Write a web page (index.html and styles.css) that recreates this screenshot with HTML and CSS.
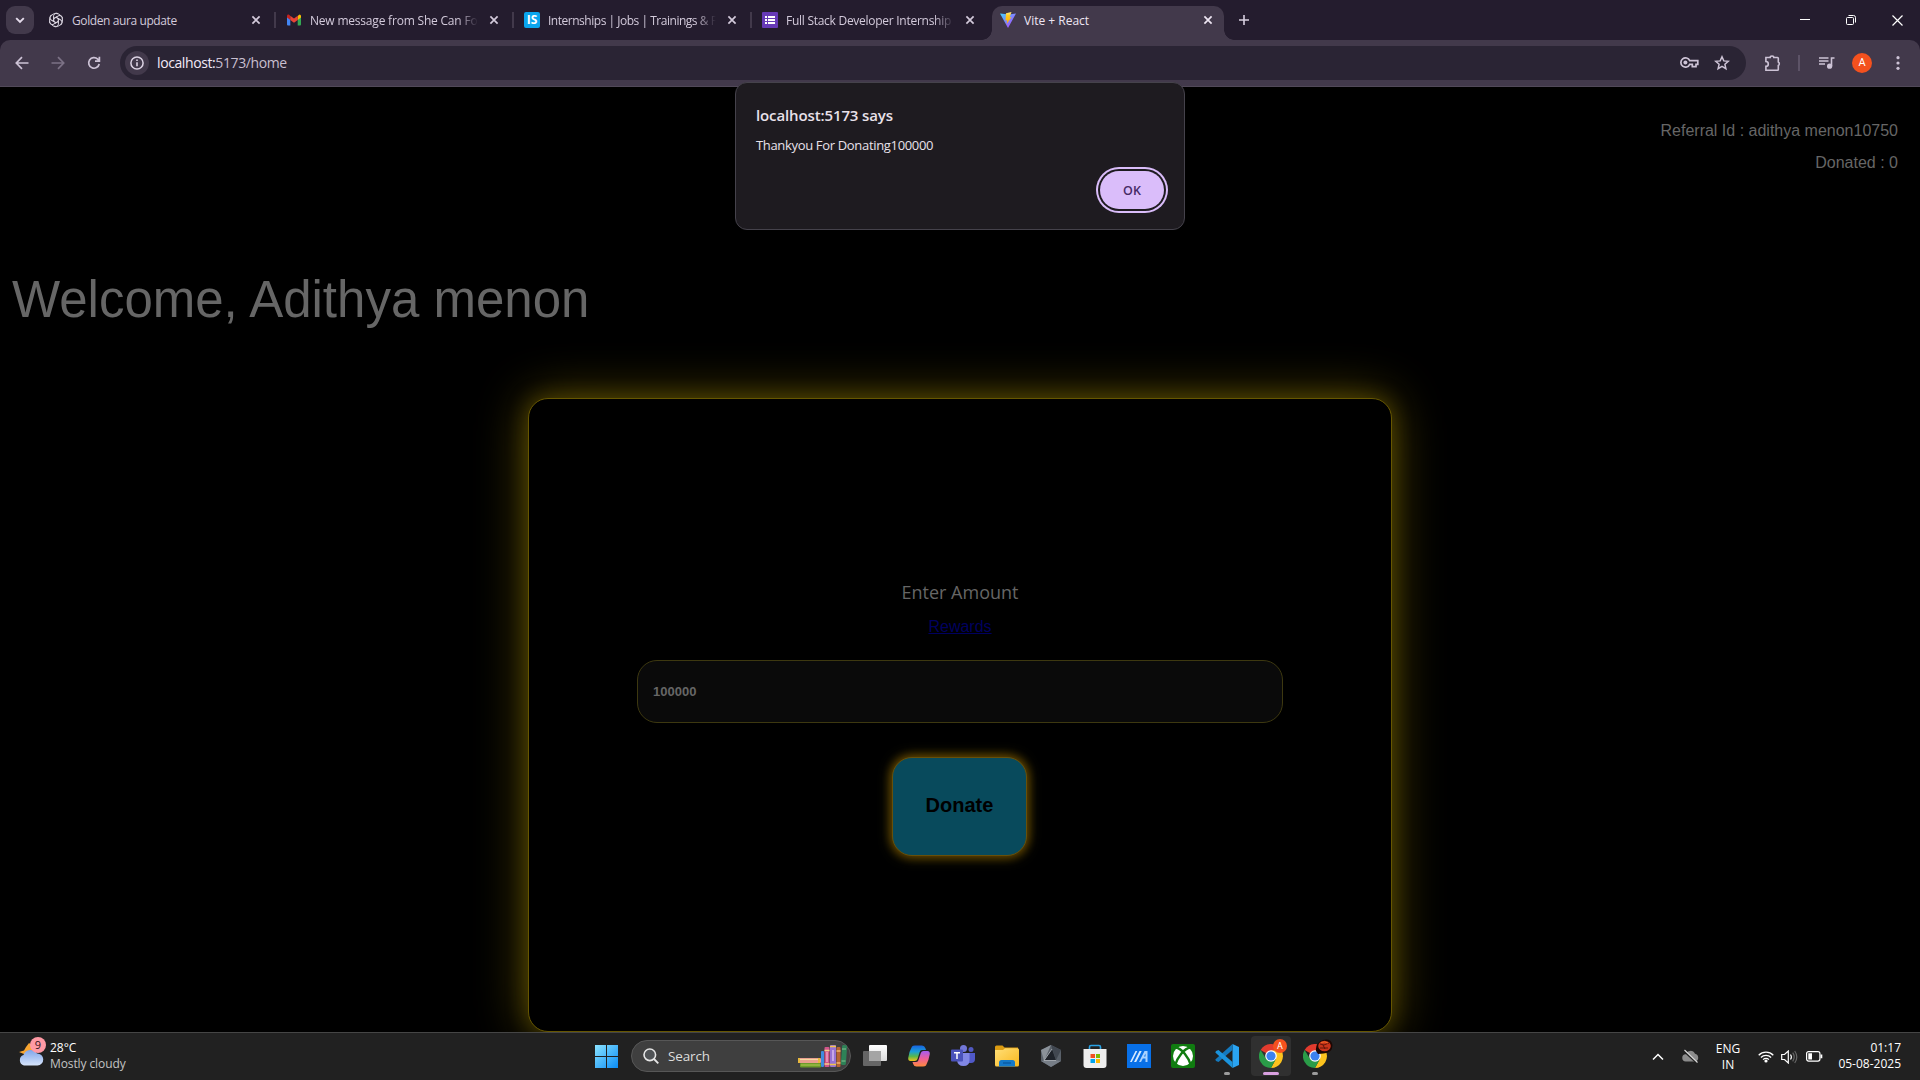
FILE: index.html
```html
<!DOCTYPE html>
<html lang="en">
<head>
<meta charset="utf-8">
<title>Vite + React</title>
<link rel="stylesheet" href="styles.css">
</head>
<body>
<svg width="0" height="0" class="defs">
  <defs>
    <symbol id="x" viewBox="0 0 10 10"><path d="M1.4 1.4l7.2 7.2M8.6 1.4L1.4 8.6" fill="none" stroke="currentColor" stroke-width="1.7"/></symbol>
    <symbol id="chrome" viewBox="0 0 24 24">
      <path d="M12 12L1.6 6A12 12 0 0 1 22.4 6Z" fill="#e33b2e"/>
      <path d="M12 6.4H22.6A12 12 0 0 1 12 24L17 14.8Z" fill="#fcc31e"/>
      <path d="M1.6 6L7 14.8L12 17.6L17 14.8L12 24A12 12 0 0 1 1.6 6Z" fill="#2a9c48"/>
      <circle cx="12" cy="12" r="5.8" fill="#fff"/><circle cx="12" cy="12" r="4.6" fill="#3b82f0"/>
    </symbol>
    <linearGradient id="gWin" x1="0" y1="0" x2="1" y2="1"><stop offset="0" stop-color="#8be3ff"/><stop offset="1" stop-color="#0a8cf5"/></linearGradient>
    <linearGradient id="gVite" x1="0" y1="0" x2="1" y2="1"><stop offset="0" stop-color="#41d1ff"/><stop offset="1" stop-color="#bd34fe"/></linearGradient>
    <linearGradient id="gBolt" x1="0" y1="0" x2="0" y2="1"><stop offset="0" stop-color="#ffea83"/><stop offset=".3" stop-color="#ffcb1f"/><stop offset="1" stop-color="#ffa800"/></linearGradient>
    <linearGradient id="gCloud" x1="0" y1="0" x2="0" y2="1"><stop offset="0" stop-color="#7fa5ea"/><stop offset="1" stop-color="#d6e4fb"/></linearGradient>
    <linearGradient id="gCopA" x1="0" y1="0" x2="0" y2="1"><stop offset="0" stop-color="#1763e0"/><stop offset=".4" stop-color="#1a9fd8"/><stop offset=".7" stop-color="#58b84b"/><stop offset="1" stop-color="#f1c21b"/></linearGradient>
    <linearGradient id="gCopB" x1="0" y1="0" x2="0" y2="1"><stop offset="0" stop-color="#a45cf0"/><stop offset=".5" stop-color="#ee5f98"/><stop offset="1" stop-color="#ff8a3c"/></linearGradient>
    <linearGradient id="gFold" x1="0" y1="0" x2="1" y2="1"><stop offset="0" stop-color="#ffdf78"/><stop offset="1" stop-color="#f9b71c"/></linearGradient>
    <linearGradient id="gTask" x1="0" y1="0" x2="0" y2="1"><stop offset="0" stop-color="#fff"/><stop offset="1" stop-color="#dcdcdc"/></linearGradient>
  </defs>
</svg>

<header class="tabstrip">
  <div class="tab-search"><svg width="10" height="7" viewBox="0 0 10 7"><path d="M1.2 1.2L5 5l3.800-3.800" fill="none" stroke="#e5dcec" stroke-width="1.900"/></svg></div>
  <div class="tab">
    <svg class="fav" viewBox="0 0 16 16"><g fill="none" stroke="#d9d4df" stroke-width="1">
      <path id="petal" d="M8 5.300L5.600 6.700V3.800A2.900 2.900 0 0 1 10.300 1.800M8 5.300L11.500 7.300"/><use href="#petal" transform="rotate(60 8 8)"/><use href="#petal" transform="rotate(120 8 8)"/><use href="#petal" transform="rotate(180 8 8)"/><use href="#petal" transform="rotate(240 8 8)"/><use href="#petal" transform="rotate(300 8 8)"/><circle cx="8" cy="8" r="6.500"/></g></svg>
    <span class="tab-title t1">Golden aura update</span><svg class="close"><use href="#x"/></svg>
  </div>
  <div class="tab">
    <svg class="fav" viewBox="0 0 16 16"><path d="M1 4v8.500q0 1 1 1h2.300V6z" fill="#4285f4"/><path d="M15 4v8.500q0 1-1 1h-2.300V6z" fill="#34a853"/><path d="M11.700 4v4L15 5.500V4q0-1.600-1.500-1.600z" fill="#fbbc04"/><path d="M1 4v1.500L4.300 8V4L2.800 2.600Q1 2.400 1 4z" fill="#c5221f"/><path d="M2.500 2.400L8 6.600l3.700-2.800V8L8 10.800 4.300 8V3.800z" fill="#ea4335"/></svg>
    <span class="tab-title fade t2">New message from She Can Fou</span><svg class="close"><use href="#x"/></svg>
  </div>
  <div class="tab">
    <div class="fav fav-is">IS</div>
    <span class="tab-title fade t3">Internships | Jobs | Trainings &amp; P</span><svg class="close"><use href="#x"/></svg>
  </div>
  <div class="tab last">
    <svg class="fav" viewBox="0 0 16 16"><rect width="16" height="16" rx="1" fill="#673ab7"/><path d="M3 4h2v2H3zM3 7h2v2H3zM3 10h2v2H3zM6 4h7v2H6zM6 7h7v2H6zM6 10h7v2H6z" fill="#fff"/></svg>
    <span class="tab-title fade t4">Full Stack Developer Internship -</span><svg class="close"><use href="#x"/></svg>
  </div>
  <div class="tab active">
    <svg class="fav" viewBox="0 0 16 16"><path d="M0 1.500L8 16 16 1.500 9 2.600z" fill="url(#gVite)"/><path d="M11.500 0L6 1.200 5.500 8.600l1.700-.3-.5 3.600L11.600 5l-2 .4L11.500 0z" fill="url(#gBolt)"/></svg>
    <span class="tab-title t5">Vite + React</span><svg class="close"><use href="#x"/></svg>
  </div>
  <svg class="newtab" width="10" height="10"><path d="M5 0v10M0 5h10" stroke="#d8cfe0" stroke-width="1.600"/></svg>
  <div class="winctl">
    <svg width="10" height="12"><path d="M0 5.500h10" stroke="#fff"/></svg>
    <svg width="10" height="10" viewBox="0 0 10 10"><rect x=".5" y="2.500" width="7" height="7" rx="1" fill="none" stroke="#fff"/><path d="M2.500 .5h5q2 0 2 2v5" fill="none" stroke="#fff"/></svg>
    <svg width="11" height="11"><path d="M.5 .5l10 10M10.500 .5l-10 10" stroke="#fff" stroke-width="1.200"/></svg>
  </div>
</header>

<nav class="toolbar">
  <svg class="nav" viewBox="0 0 16 16"><path d="M14.500 8H2.500M8 2.200L2.300 8 8 13.800" fill="none" stroke="#cdc3d6" stroke-width="1.700"/></svg>
  <svg class="nav" viewBox="0 0 16 16"><path d="M1.500 8h12M8 2.200L13.700 8 8 13.800" fill="none" stroke="#7c7286" stroke-width="1.700"/></svg>
  <svg class="nav" viewBox="0 0 16 16"><path d="M13.200 9A5.300 5.300 0 1 1 11.700 4.100L13.300 5.700M13.400 1.800V6.100H9" fill="none" stroke="#cdc3d6" stroke-width="1.700"/></svg>
  <div class="omnibox">
    <div class="info"><svg width="14" height="14"><circle cx="7" cy="7" r="6.100" fill="none" stroke="#dcd3e4" stroke-width="1.500"/><path d="M7 6.300v4M7 3.400v1.700" stroke="#dcd3e4" stroke-width="1.600"/></svg></div>
    <span class="url"><b>localhost:</b>5173/home</span>
    <svg class="key" width="19" height="11" viewBox="0 0 19 11"><path d="M9.700 3.700A4.600 4.600 0 1 0 9.700 7.300H12.300V9.700H16V7.300H17.800V3.700Z" fill="none" stroke="#cdc3d6" stroke-width="1.700"/><circle cx="5.400" cy="5.500" r="2" fill="#cdc3d6"/></svg>
    <svg width="16" height="16" viewBox="0 0 16 16"><path d="M8 1.800l1.800 4.100 4.500.4-3.400 3 1 4.400L8 11.400l-3.900 2.300 1-4.400-3.400-3 4.500-.4z" fill="none" stroke="#cdc3d6" stroke-width="1.500"/></svg>
  </div>
  <svg class="puzzle" width="18" height="18" viewBox="0 0 18 18"><path d="M2 3.500H6.200A1.800 1.500 0 0 1 9.800 3.500H13.500Q14.300 3.500 14.300 4.300V8A1.500 1.900 0 0 1 14.300 11.600V15.500Q14.300 16.300 13.500 16.300H1.900V12.300A2.300 2.300 0 0 0 1.900 7.500V3.500Z" fill="none" stroke="#cdc3d6" stroke-width="1.600"/></svg>
  <i class="bar"></i>
  <svg class="music" width="16" height="14" viewBox="0 0 16 14"><path d="M0 2h9.500M0 5h9.500M0 8h6M12.500 10V2H15.500" fill="none" stroke="#cdc3d6" stroke-width="1.600"/><circle cx="10.600" cy="10.200" r="2.600" fill="#cdc3d6"/></svg>
  <div class="avatar">A</div>
  <svg class="dots" width="4" height="14"><circle cx="2" cy="1.700" r="1.600" fill="#cdc3d6"/><circle cx="2" cy="7" r="1.600" fill="#cdc3d6"/><circle cx="2" cy="12.300" r="1.600" fill="#cdc3d6"/></svg>
</nav>

<main class="page">
  <div class="stats"><p>Referral Id : adithya menon10750</p><p>Donated : 0</p></div>
  <h1>Welcome, Adithya menon</h1>
  <section class="card">
    <label>Enter Amount</label>
    <a href="#">Rewards</a>
    <input type="text" value="100000">
    <button class="donate">Donate</button>
  </section>
</main>

<div class="dialog">
  <h2>localhost:5173 says</h2>
  <p>Thankyou For Donating100000</p>
  <button>OK</button>
</div>

<footer class="taskbar">
  <div class="weather">
    <div class="wicon">
      <svg width="26" height="28" viewBox="0 0 26 28"><path d="M1 14l5-1.500L8 9l3-4 3 2v9H6z" fill="#f7a531"/><path d="M6 27.500a5.500 5.500 0 0 1-.5-10.500 7.500 7.500 0 0 1 13.500-1.500 6 6 0 0 1 .5 12z" fill="url(#gCloud)"/></svg>
      <span class="badge">9</span>
    </div>
    <div class="wtext"><span>28°C</span><span class="cond">Mostly cloudy</span></div>
  </div>
  <div class="apps">
    <svg class="start" width="23" height="23" viewBox="0 0 23 23"><path d="M0 0h11v11H0zM12 0h11v11H12zM0 12h11v11H0zM12 12h11v11H12z" fill="url(#gWin)"/></svg>
    <div class="search">
      <svg width="16" height="16" viewBox="0 0 16 16"><circle cx="6.800" cy="6.800" r="5.800" fill="#505356" stroke="#e6e6e6" stroke-width="1.600"/><path d="M11 11l4.300 4.300" stroke="#e6e6e6" stroke-width="1.800"/></svg>
      <span>Search</span>
      <svg class="books" width="49" height="23" viewBox="0 0 49 23">
        <rect x="0" y="13" width="23" height="5" rx="1" fill="#e9a08f"/><path d="M2 14.500h20" stroke="#f8d9a0"/><path d="M1 13v5M21 13v5" stroke="#e8b83e" stroke-width="2"/><rect x="2" y="18" width="21" height="4.500" rx="1" fill="#6d9b2c"/><path d="M3 20h19" stroke="#b3c950"/>
        <rect x="23" y="6" width="3" height="16" rx="1" fill="#3d8de0"/><rect x="26.500" y="2" width="5" height="20" rx="1" fill="#d0558b"/><path d="M29 7v10" stroke="#eda3bf" stroke-width="1.500"/><path d="M26.500 5.500h5M26.500 19h5" stroke="#f6cf87" stroke-width="1.500"/><rect x="32" y="0" width="6" height="22" rx="1" fill="#9773d4"/><path d="M32 1.500h6M32 19.500h6" stroke="#f3c34b" stroke-width="1.500"/><path d="M35 5v11" stroke="#d7b8ef" stroke-width="1.500"/><rect x="38.500" y="2" width="4" height="20" rx="1" fill="#b96434"/><path d="M38.500 6h4M38.500 18h4" stroke="#f0b56c" stroke-width="1.500"/><rect x="43.500" y="0" width="5" height="20" rx="1.500" fill="#2e8257" transform="rotate(4 45 10)"/><path d="M44 4h4M43.500 16h4" stroke="#84c193"/>
      </svg>
    </div>
    <div class="app"><svg viewBox="0 0 24 24"><rect x="6" y="1" width="18" height="16" rx="1" fill="url(#gTask)"/><rect x="0" y="7" width="18" height="15" rx="1" fill="#666"/><path d="M6 7h12v10H6z" fill="#a5a5a5"/></svg></div>
    <div class="app"><svg viewBox="0 0 24 24"><path d="M5 2.500Q6 1.500 8 1.500h7q2.500 0 3.300 2.500l.7 2h-4q-1.800 0-2.300 2l-2.200 7q-.7 2-2.700 2H3.500q-2.500 0-2.300-3Q2.300 7 5 2.500z" fill="url(#gCopA)"/><path d="M19 21.500q-1 1-3 1H9.500q-2.500 0-3.300-2.500L5.500 18h3.700q1.800 0 2.300-2l2.300-7q.7-2 2.700-2h4q2.500 0 2.300 3Q21.700 17 19 21.500z" fill="url(#gCopB)"/></svg></div>
    <div class="app"><svg viewBox="0 0 24 24"><circle cx="12.500" cy="4.500" r="3.500" fill="#7277d8"/><circle cx="20" cy="5.500" r="2.500" fill="#5159c2"/><path d="M17 9h7v6q0 4-4 4h-3z" fill="#5059c9"/><path d="M6 9h12.500v7q0 6-6 6t-6.500-6z" fill="#8187e5"/><rect x="0" y="5.500" width="12" height="12" rx="1" fill="#4a52ba"/><path d="M3 8.700h6M6 8.500v6.500" stroke="#fff" stroke-width="1.500"/></svg></div>
    <div class="app"><svg viewBox="0 0 24 24"><path d="M0 3q0-1.500 1.500-1.500h6l2 2H23v6H0z" fill="#dc9c12"/><path d="M0 6h8l2-1.700H22.500q1.500 0 1.500 1.500V21q0 1.500-1.500 1.500h-21Q0 22.500 0 21z" fill="url(#gFold)"/><path d="M4 22.500v-4q0-2.500 2.500-2.500h11q2.500 0 2.500 2.500v4z" fill="#1479c9"/><path d="M8 19h8" stroke="#0a5ca5" stroke-width="1.500"/></svg></div>
    <div class="app"><svg viewBox="0 0 24 24"><path d="M12 1l10 5v11l-10 6-10-6V6z" fill="#596069"/><path d="M12 1L2 6l3 11z" fill="#8b929a"/><path d="M12 1l10 5-5 10z" fill="#414750"/><path d="M2 17l10 6 10-6-6-1z" fill="#777e87"/><path d="M13 5L5 16.500h12z" fill="#1f232a"/><path d="M13 5L5 16.500l12 0" fill="none" stroke="#b8bdc3" stroke-width=".8"/></svg></div>
    <div class="app"><svg viewBox="0 0 24 24"><path d="M6.500 6V3q0-1.500 1.500-1.500h8q1.500 0 1.500 1.500v3" fill="none" stroke="#29a2e5" stroke-width="1.600"/><path d="M.5 5h23v16q0 3-3 3h-17q-3 0-3-3z" fill="#efefef"/><path d="M7.500 10H12v4H7.500z" fill="#f25022"/><path d="M13 10h4v4h-4z" fill="#7fba00"/><path d="M7.500 15H12v4H7.500z" fill="#00a4ef"/><path d="M13 15h4v4h-4z" fill="#ffb900"/></svg></div>
    <div class="app"><svg viewBox="0 0 24 24"><path d="M0 0h24v24H0z" fill="#0870e8"/><path d="M3 18L8.500 7h1.800L4.800 18zM7 18L12.500 7h2.200L9.200 18z" fill="#d5eaff"/><path d="M12 18l5.500-11H20.500V18h-2v-3.500h-2.700L14 18zM17 12.500h1.500V9.500z" fill="#a9d2ff"/></svg></div>
    <div class="app"><svg viewBox="0 0 24 24"><rect width="24" height="24" rx="2" fill="#107c10"/><circle cx="12" cy="12" r="10" fill="#fff"/><path d="M4.500 3.500C11 4.500 17.500 13 20 21.500M19.500 3.500C13 4.500 6.500 13 4 21.500" fill="none" stroke="#107c10" stroke-width="2.400"/></svg></div>
    <div class="app run"><svg viewBox="0 0 24 24"><path d="M17.500 0L24 3v18l-6.500 3z" fill="#2aa4f2"/><path d="M17.500 0v6L3.500 18 1 17 .3 15.500z" fill="#1479bd"/><path d="M17.500 24v-6L3.500 6 1 7 .3 8.500z" fill="#1b93dc"/></svg></div>
    <div class="app run on"><svg><use href="#chrome"/></svg><span class="pf">A</span></div>
    <div class="app run"><svg><use href="#chrome"/></svg><svg class="pf2" viewBox="0 0 18 16"><path d="M3 15L1 12Q0 4 8 1q8-2 9.500 5 0 8-9 8.500z" fill="#1b0704"/><ellipse cx="9.500" cy="7" rx="6.300" ry="5.300" fill="#c9341a"/><path d="M5 5l4 1 5-2M5 9h8M8 6l2 4" stroke="#4b0e06" stroke-width=".8" fill="none"/><path d="M6 3.500q4-1.500 7 .500" stroke="#f06a27" fill="none"/></svg></div>
  </div>
  <div class="tray">
    <svg class="up" width="12" height="8"><path d="M1 6.500l5-5 5 5" fill="none" stroke="#fff" stroke-width="1.500"/></svg>
    <svg class="cloud" width="17" height="15" viewBox="0 0 17 15"><path d="M4 12.500a3.600 3.600 0 0 1-.3-7.200 5 5 0 0 1 9.300-.5 4 4 0 0 1 .5 7.700z" fill="#8c8c8c"/><path d="M1.500 1.500l13.500 12.500" stroke="#202020" stroke-width="2"/><path d="M2.500 1l13 12.500" stroke="#ddd" stroke-width="1.100"/></svg>
    <div class="lang"><span>ENG</span><span>IN</span></div>
    <svg class="wifi" width="16" height="13" viewBox="0 0 16 13"><g fill="none" stroke="#fff" stroke-width="1.300"><path d="M.7 5.200a10.300 10.300 0 0 1 14.600 0M2.900 7.500a7.200 7.200 0 0 1 10.200 0M5.100 9.600a4.100 4.100 0 0 1 5.800 0"/></g><circle cx="8" cy="11" r="1.600" fill="#fff"/></svg>
    <svg class="vol" width="17" height="14" viewBox="0 0 17 14"><path d="M.7 4.500H3.500L7.300 1v12L3.500 9.500H.7z" fill="none" stroke="#fff" stroke-width="1.200"/><path d="M9.500 4.500q1.800 2.500 0 5" fill="none" stroke="#fff" stroke-width="1.200"/><path d="M11.700 2.700q3 4.300 0 8.600M13.700 1q4.200 6 0 12" fill="none" stroke="#666" stroke-width="1.200"/></svg>
    <svg class="bat" width="17" height="11" viewBox="0 0 17 11"><rect x=".6" y=".6" width="13.300" height="9.500" rx="2" fill="none" stroke="#fff" stroke-width="1.200"/><path d="M2.300 2.300H6v6.200H2.300zM14.500 3.500h1.800v3.700h-1.800z" fill="#fff"/></svg>
    <div class="clock"><span class="time">01:17</span><span class="date">05-08-2025</span></div>
  </div>
</footer>
</body>
</html>
```
FILE: styles.css
```css
* { box-sizing: border-box; }
html { height: 100%; background: #000; }
body { margin: 0; width: 1920px; height: 1080px; overflow: hidden; display: flex; flex-direction: column; background: linear-gradient(#241c2e 60px, #000 60px); font-family: "Open Sans", "Noto Sans", sans-serif; }
svg { display: block; flex: none; }
.defs { position: absolute; }
h1, h2, p { margin: 0; font-weight: 400; }

.tabstrip { height: 40px; flex: none; display: flex; background: #241c2e; padding-left: 6px; }
.tab-search { width: 28px; height: 28px; margin: 6px 6px 0 0; border-radius: 9px; background: #42394b; display: flex; align-items: center; justify-content: center; }
.tab { width: 238px; height: 40px; padding: 0 17px 0 8px; display: flex; align-items: center; position: relative; color: #d3cadb; font-size: 12px; }
.tab:not(.last):not(.active)::after { content: ""; position: absolute; left: 234px; top: 12px; width: 2px; height: 16px; background: #42394b; }
.fav { width: 16px; height: 16px; margin-right: 8px; flex: none; }
.fav-is { background: #0aa5ee; border-radius: 2px; color: #fff; font: 700 12px/16px "Open Sans", sans-serif; text-align: center; }
.tab-title { flex: none; width: 168px; margin-right: 11px; padding-top: 2px; white-space: nowrap; line-height: 20px; }
.t1 { letter-spacing: -.4px; }
.t2 { letter-spacing: -.2px; }
.t3 { letter-spacing: -.48px; }
.t4 { letter-spacing: -.27px; }
.fade { -webkit-mask-image: linear-gradient(90deg, #000 148px, transparent 168px); mask-image: linear-gradient(90deg, #000 148px, transparent 168px); }
.close { width: 10px; height: 10px; }
.active { width: 232px; height: 34px; margin-top: 6px; padding-bottom: 6px; border-radius: 10px 10px 0 0; background: #42394b; color: #eee6f3; }
.active::before, .active::after { content: ""; position: absolute; bottom: 0; width: 10px; height: 10px; }
.active::before { left: -10px; background: radial-gradient(circle at 0 0, transparent 9.5px, #42394b 10px); }
.active::after { right: -10px; background: radial-gradient(circle at 100% 0, transparent 9.5px, #42394b 10px); }
.newtab { margin: 15px 0 0 15px; }
.winctl { margin-left: auto; padding-right: 17px; display: flex; align-items: center; gap: 36px; }

.toolbar { height: 47px; flex: none; display: flex; align-items: center; padding: 0 20px 1px 14px; background: #42394b; border-bottom: 1px solid #514959; border-radius: 10px 10px 0 0; }
.nav { width: 16px; height: 16px; margin-right: 20px; }
.omnibox { width: 1626px; height: 34px; margin-left: -2px; border-radius: 17px; background: #2a2434; display: flex; align-items: center; padding: 0 16px 0 5px; }
.info { width: 24px; height: 24px; border-radius: 50%; background: #42394b; display: flex; align-items: center; justify-content: center; margin-right: 8px; }
.url { flex: 1; padding-top: 1px; font-size: 14px; line-height: 20px; letter-spacing: -.4px; color: #c8bfd0; }
.url b { font-weight: 400; color: #f2eaf7; }
.key { margin-right: 15px; }
.puzzle { margin-left: 18px; }
.bar { width: 2px; height: 16px; margin-left: 16px; background: #5d5367; }
.music { margin-left: 19px; }
.avatar { width: 20px; height: 20px; margin: 0 0 0 17px; border-radius: 50%; background: #f4511e; color: #fff; font: 11px/20px Roboto, sans-serif; text-align: center; }
.dots { margin-left: 24px; }

.page { height: 945px; flex: none; overflow: hidden; background: #000; font-family: "Liberation Sans", Arial, sans-serif; color: #666; display: flex; flex-direction: column; align-items: center; }
.stats { align-self: flex-end; padding: 28px 22px 0 0; text-align: right; font-size: 16px; line-height: 32px; }
h1 { align-self: flex-start; padding-left: 12px; margin-top: 92px; font-size: 51px; line-height: 58px; }
.card { width: 864px; height: 634px; flex: none; margin-top: 69px; border: 1px solid #665600; border-radius: 20px; background: #000; box-shadow: 0 0 20px rgba(102,86,0,.55), 0 0 50px rgba(102,86,0,.9); display: flex; flex-direction: column; align-items: center; padding-top: 181px; }
.card label { font: 18px/24px "Open Sans", "Noto Sans", sans-serif; }
.card a { margin-top: 13px; font-size: 16px; line-height: 20px; color: #00005f; }
.card input { width: 646px; height: 63px; margin-top: 23px; padding: 0 15px; border: 1px solid #3d3810; border-radius: 20px; background: #0a0a0a; color: #666; font: 700 13px "Liberation Sans", Arial, sans-serif; outline: none; }
.donate { width: 135px; height: 99px; margin: 34px 1px 0 0; padding: 0 0 2px; border: 1px solid #66500a; border-radius: 20px; background: #084a5c; color: #000; font: 700 20px "Liberation Sans", Arial, sans-serif; box-shadow: 0 0 10px #664200, 0 0 14px #665600; }

.dialog { position: absolute; left: 735px; top: 82px; width: 450px; height: 148px; padding: 20px; border: 1px solid #45424b; border-radius: 12px; background: #1e1b20; color: #e8e1ea; }
.dialog h2 { font-size: 15px; font-weight: 600; line-height: 24px; letter-spacing: -.12px; }
.dialog p { margin-top: 8px; font-size: 13px; line-height: 20px; letter-spacing: -.33px; }
.dialog button { position: absolute; right: 20px; bottom: 20px; width: 64px; height: 38px; border: 0; border-radius: 19px; background: #dabdfa; color: #472a66; font: 600 12.5px "Open Sans", sans-serif; box-shadow: 0 0 0 2px #1e1b20, 0 0 0 4px #dabdfa; }

.taskbar { height: 48px; flex: none; display: flex; border-top: 1px solid #454545; background: #212121; color: #fff; font-size: 12px; }
.weather { width: 595px; flex: none; display: flex; padding: 4px 0 0 18px; }
.wicon { position: relative; width: 32px; padding-top: 1px; }
.badge { position: absolute; left: 12px; top: 0; width: 16px; height: 16px; border-radius: 50%; background: #ff9aa5; color: #30151a; font-size: 11px; line-height: 16px; text-align: center; }
.wtext, .lang, .clock { display: flex; flex-direction: column; line-height: 16px; padding-top: 3px; }
.cond { color: #c3c3c3; letter-spacing: -.1px; }
.apps { display: flex; align-items: center; flex: none; padding-bottom: 1px; }
.start { margin-right: 13px; }
.search { width: 220px; height: 32px; margin-right: 2px; border: 1px solid #575757; border-radius: 16px; background: #3f3f3f; display: flex; align-items: center; padding: 0 3px 0 11px; font-size: 13.5px; letter-spacing: -.15px; color: #ddd; }
.search span { margin-left: 9px; }
.books { margin-left: auto; }
.app { position: relative; flex: none; width: 40px; height: 40px; margin: 0 2px; display: flex; align-items: center; justify-content: center; border-radius: 4px; }
.app svg { width: 24px; height: 24px; }
.run::after { content: ""; position: absolute; left: 17px; bottom: 1px; width: 6px; height: 3px; border-radius: 2px; background: #9b9b9b; }
.on { background: #303030; }
.on::after { left: 12px; width: 16px; background: #d9a0e0; }
.pf { position: absolute; left: 22px; top: 3px; width: 14px; height: 14px; border-radius: 50%; background: #f4511e; color: #fff; font: 9px/14px Roboto, sans-serif; text-align: center; }
.app .pf2 { position: absolute; left: 20px; top: 3px; width: 18px; height: 16px; }
.tray { display: flex; align-items: center; margin-left: auto; padding-right: 19px; }
.cloud { margin-left: 18px; }
.lang { width: 30px; margin-left: 14px; text-align: center; height: 48px; padding-top: 8px; }
.wifi { margin-left: 15px; }
.vol { margin-left: 7px; }
.bat { margin-left: 8px; }
.clock { width: 78px; height: 48px; text-align: right; padding-top: 7px; align-items: flex-end; }
```
